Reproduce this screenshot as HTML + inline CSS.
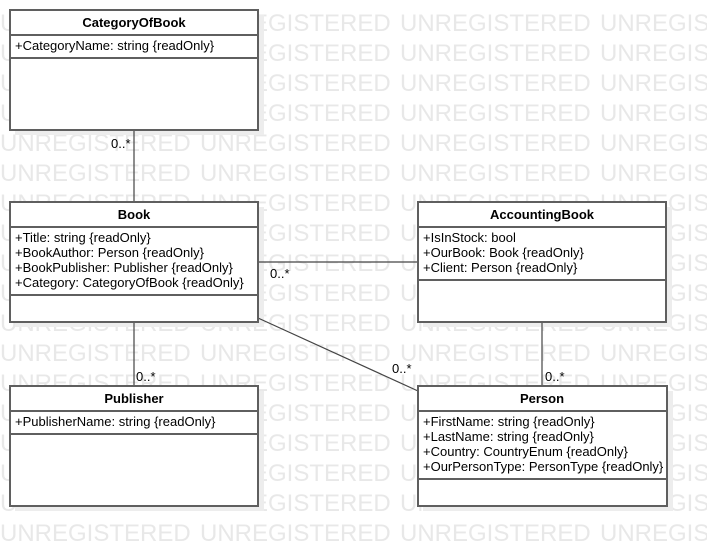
<!DOCTYPE html>
<html><head><meta charset="utf-8"><style>
html,body{margin:0;padding:0;background:#fff}
svg{display:block}
.w{font:24px "Liberation Sans",sans-serif;fill:#e8e8e8}
.t{font:13px "Liberation Sans",sans-serif;fill:#000}
.h{font:bold 13px "Liberation Sans",sans-serif;fill:#000;text-anchor:middle}
.b{fill:#fff;stroke:#5f5f5f;stroke-width:2}
.s{fill:#ededed}
.l{stroke:#444;stroke-width:1.2;fill:none}
</style></head><body>
<svg width="707" height="546" xmlns="http://www.w3.org/2000/svg">
<g class="w">
<text x="0" y="31">UNREGISTERED</text><text x="200" y="31">UNREGISTERED</text><text x="400" y="31">UNREGISTERED</text><text x="600" y="31">UNREGISTERED</text>
<text x="0" y="61">UNREGISTERED</text><text x="200" y="61">UNREGISTERED</text><text x="400" y="61">UNREGISTERED</text><text x="600" y="61">UNREGISTERED</text>
<text x="0" y="91">UNREGISTERED</text><text x="200" y="91">UNREGISTERED</text><text x="400" y="91">UNREGISTERED</text><text x="600" y="91">UNREGISTERED</text>
<text x="0" y="121">UNREGISTERED</text><text x="200" y="121">UNREGISTERED</text><text x="400" y="121">UNREGISTERED</text><text x="600" y="121">UNREGISTERED</text>
<text x="0" y="151">UNREGISTERED</text><text x="200" y="151">UNREGISTERED</text><text x="400" y="151">UNREGISTERED</text><text x="600" y="151">UNREGISTERED</text>
<text x="0" y="181">UNREGISTERED</text><text x="200" y="181">UNREGISTERED</text><text x="400" y="181">UNREGISTERED</text><text x="600" y="181">UNREGISTERED</text>
<text x="0" y="211">UNREGISTERED</text><text x="200" y="211">UNREGISTERED</text><text x="400" y="211">UNREGISTERED</text><text x="600" y="211">UNREGISTERED</text>
<text x="0" y="241">UNREGISTERED</text><text x="200" y="241">UNREGISTERED</text><text x="400" y="241">UNREGISTERED</text><text x="600" y="241">UNREGISTERED</text>
<text x="0" y="271">UNREGISTERED</text><text x="200" y="271">UNREGISTERED</text><text x="400" y="271">UNREGISTERED</text><text x="600" y="271">UNREGISTERED</text>
<text x="0" y="301">UNREGISTERED</text><text x="200" y="301">UNREGISTERED</text><text x="400" y="301">UNREGISTERED</text><text x="600" y="301">UNREGISTERED</text>
<text x="0" y="331">UNREGISTERED</text><text x="200" y="331">UNREGISTERED</text><text x="400" y="331">UNREGISTERED</text><text x="600" y="331">UNREGISTERED</text>
<text x="0" y="361">UNREGISTERED</text><text x="200" y="361">UNREGISTERED</text><text x="400" y="361">UNREGISTERED</text><text x="600" y="361">UNREGISTERED</text>
<text x="0" y="391">UNREGISTERED</text><text x="200" y="391">UNREGISTERED</text><text x="400" y="391">UNREGISTERED</text><text x="600" y="391">UNREGISTERED</text>
<text x="0" y="421">UNREGISTERED</text><text x="200" y="421">UNREGISTERED</text><text x="400" y="421">UNREGISTERED</text><text x="600" y="421">UNREGISTERED</text>
<text x="0" y="451">UNREGISTERED</text><text x="200" y="451">UNREGISTERED</text><text x="400" y="451">UNREGISTERED</text><text x="600" y="451">UNREGISTERED</text>
<text x="0" y="481">UNREGISTERED</text><text x="200" y="481">UNREGISTERED</text><text x="400" y="481">UNREGISTERED</text><text x="600" y="481">UNREGISTERED</text>
<text x="0" y="511">UNREGISTERED</text><text x="200" y="511">UNREGISTERED</text><text x="400" y="511">UNREGISTERED</text><text x="600" y="511">UNREGISTERED</text>
<text x="0" y="541">UNREGISTERED</text><text x="200" y="541">UNREGISTERED</text><text x="400" y="541">UNREGISTERED</text><text x="600" y="541">UNREGISTERED</text>
</g>
<!-- shadows -->
<rect class="s" x="15" y="15" width="249" height="120"/>
<rect class="s" x="15" y="207" width="249" height="120"/>
<rect class="s" x="15" y="391" width="249" height="120"/>
<rect class="s" x="423" y="207" width="249" height="120"/>
<rect class="s" x="423" y="391" width="250" height="120"/>
<!-- lines -->
<line class="l" x1="134" y1="130" x2="134" y2="202"/>
<line class="l" x1="134" y1="322" x2="134" y2="386"/>
<line class="l" x1="258" y1="262" x2="418" y2="262"/>
<line class="l" x1="258" y1="318" x2="418" y2="391"/>
<line class="l" x1="542" y1="322" x2="542" y2="386"/>
<g class="t">
<text x="111" y="148">0..*</text>
<text x="270" y="278">0..*</text>
<text x="136" y="381">0..*</text>
<text x="392" y="373">0..*</text>
<text x="545" y="381">0..*</text>
</g>
<!-- CategoryOfBook -->
<rect class="b" x="10" y="10" width="248" height="120"/>
<line class="b" x1="10" y1="35" x2="258" y2="35"/><line class="b" x1="10" y1="58" x2="258" y2="58"/>
<text class="h" x="134" y="27">CategoryOfBook</text>
<text class="t" x="15" y="50">+CategoryName: string {readOnly}</text>
<!-- Book -->
<rect class="b" x="10" y="202" width="248" height="120"/>
<line class="b" x1="10" y1="227" x2="258" y2="227"/><line class="b" x1="10" y1="295" x2="258" y2="295"/>
<text class="h" x="134" y="219">Book</text>
<text class="t" x="15" y="242">+Title: string {readOnly}</text>
<text class="t" x="15" y="257">+BookAuthor: Person {readOnly}</text>
<text class="t" x="15" y="272">+BookPublisher: Publisher {readOnly}</text>
<text class="t" x="15" y="287">+Category: CategoryOfBook {readOnly}</text>
<!-- Publisher -->
<rect class="b" x="10" y="386" width="248" height="120"/>
<line class="b" x1="10" y1="411" x2="258" y2="411"/><line class="b" x1="10" y1="434" x2="258" y2="434"/>
<text class="h" x="134" y="403">Publisher</text>
<text class="t" x="15" y="426">+PublisherName: string {readOnly}</text>
<!-- AccountingBook -->
<rect class="b" x="418" y="202" width="248" height="120"/>
<line class="b" x1="418" y1="227" x2="666" y2="227"/><line class="b" x1="418" y1="280" x2="666" y2="280"/>
<text class="h" x="542" y="219">AccountingBook</text>
<text class="t" x="423" y="242">+IsInStock: bool</text>
<text class="t" x="423" y="257">+OurBook: Book {readOnly}</text>
<text class="t" x="423" y="272">+Client: Person {readOnly}</text>
<!-- Person -->
<rect class="b" x="418" y="386" width="249" height="120"/>
<line class="b" x1="418" y1="411" x2="667" y2="411"/><line class="b" x1="418" y1="479" x2="667" y2="479"/>
<text class="h" x="542" y="403">Person</text>
<text class="t" x="423" y="426">+FirstName: string {readOnly}</text>
<text class="t" x="423" y="441">+LastName: string {readOnly}</text>
<text class="t" x="423" y="456">+Country: CountryEnum {readOnly}</text>
<text class="t" x="423" y="471">+OurPersonType: PersonType {readOnly}</text>
</svg>
</body></html>
